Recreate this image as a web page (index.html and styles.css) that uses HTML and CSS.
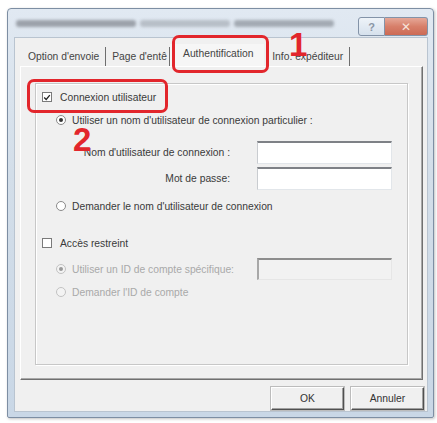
FILE: index.html
```html
<!DOCTYPE html>
<html lang="fr">
<head>
<meta charset="utf-8">
<link rel="stylesheet" href="styles.css">
</head>
<body>
<div class="window">
  <div class="titlebar">
    <div class="title-blur"><span class="b1"></span><span class="b2"></span><span class="b3"></span></div>
    <div class="caption-btns">
      <span class="cbtn help">?</span>
      <span class="cbtn close">✕</span>
    </div>
  </div>
  <div class="client">
    <div class="tabs">
      <div class="tab">Option d'envoie</div>
      <div class="tab t2">Page d'entê</div>
      <div class="tab sel">Authentification</div>
      <div class="tab">Info. expéditeur</div>
    </div>
    <div class="panel">
      <div class="group">
        <div class="row r1">
          <span class="cb checked"><svg viewBox="0 0 10 10" width="9" height="9"><path d="M1.5 5 L4 7.5 L8.5 2" fill="none" stroke="#222" stroke-width="1.6"/></svg></span>
          <span class="lbl">Connexion utilisateur</span>
        </div>
        <div class="row r2 sub">
          <span class="rb on"></span>
          <span class="lbl">Utiliser un nom d'utilisateur de connexion particulier :</span>
        </div>
        <div class="row field r3">
          <span class="flabel">Nom d'utilisateur de connexion :</span>
          <span class="input"></span>
        </div>
        <div class="row field r4">
          <span class="flabel">Mot de passe:</span>
          <span class="input"></span>
        </div>
        <div class="row r5 sub">
          <span class="rb"></span>
          <span class="lbl">Demander le nom d'utilisateur de connexion</span>
        </div>
        <div class="row r6">
          <span class="cb"></span>
          <span class="lbl">Accès restreint</span>
        </div>
        <div class="row r7 sub dis">
          <span class="rb on"></span>
          <span class="lbl wide">Utiliser un ID de compte spécifique:</span>
          <span class="input disabled"></span>
        </div>
        <div class="row r8 sub dis">
          <span class="rb"></span>
          <span class="lbl">Demander l'ID de compte</span>
        </div>
      </div>
    </div>
    <div class="footer">
      <span class="btn">OK</span>
      <span class="btn">Annuler</span>
    </div>
  </div>
</div>
<div class="mark box1"></div>
<div class="mark box2"></div>
<div class="num n1">1</div>
<div class="num n2">2</div>
</body>
</html>
```

FILE: styles.css
```css
* { box-sizing: border-box; }
html, body { margin: 0; padding: 0; }
body {
  position: relative;
  width: 437px;
  height: 423px;
  background: #ffffff;
  font-family: "Liberation Sans", Arial, sans-serif;
  font-size: 10.3px;
  color: #3a3a3a;
  overflow: hidden;
}
.window {
  margin: 8px 0 0 7px;
  width: 427px;
  height: 410px;
  border: 1px solid #7d8ea3;
  border-radius: 4px 4px 2px 2px;
  background: linear-gradient(#e1e9f2, #d3dee9 40%, #c9d7e6);
  box-shadow: 1px 1px 3px rgba(0,0,0,0.25);
  display: flex;
  flex-direction: column;
}
.titlebar {
  height: 28px;
  display: flex;
  align-items: flex-start;
  position: relative;
}
.title-blur {
  margin: 11px 0 0 8px;
  width: 325px;
  height: 8px;
  display: flex;
  gap: 4px;
  filter: blur(1.6px);
}
.title-blur span { height: 7px; background: #8f959d; border-radius: 3px; }
.title-blur .b1 { width: 120px; opacity: .85; }
.title-blur .b2 { width: 90px; opacity: .5; }
.title-blur .b3 { width: 100px; opacity: .75; }
.caption-btns {
  margin-left: auto;
  margin-right: 5px;
  margin-top: 8px;
  display: flex;
}
.cbtn {
  height: 19px;
  display: flex;
  align-items: center;
  justify-content: center;
  border: 1px solid #8393a8;
  font-size: 11px;
}
.help {
  width: 27px;
  border-radius: 3px 0 0 3px;
  background: linear-gradient(#eef3f8, #d6e1ed);
  color: #8a96a6;
  font-weight: bold;
}
.close {
  width: 43px;
  border-left: none;
  border-radius: 0 3px 3px 0;
  background: linear-gradient(#e6a898, #d77f6a 50%, #cc6a55);
  color: #f6e3dc;
  font-size: 12px;
}
.client {
  flex: 1;
  margin: 0 5px 5px 6px;
  background: #f0f0f0;
  border: 1px solid #b9c4d0;
  display: flex;
  flex-direction: column;
}
.tabs {
  margin: 8px 0 0 5px;
  height: 20px;
  display: flex;
  align-items: flex-end;
}
.tab {
  height: 19px;
  padding: 0 6px 0 8px;
  display: flex;
  align-items: center;
  border-right: 1px solid #6e6e6e;
  color: #444;
  white-space: nowrap;
}
.tab.t2 { width: 64px; overflow: hidden; padding-left: 6px; }
.tab.sel {
  height: 22px;
  width: 94px;
  justify-content: center;
  background: #f6f6f6;
  border-right: none;
  align-items: flex-start;
  padding-top: 4px;
}
.panel {
  height: 314px;
  margin: 0 4px 0 5px;
  border-left: 1px solid #ffffff;
  border-top: 1px solid #ffffff;
  border-right: 1px solid #707070;
  border-bottom: 1px solid #707070;
  box-shadow: inset -1px -1px 0 #a8a8a8;
  padding: 16px 14px 14px 14px;
}
.group {
  height: 100%;
  border: 1px solid #c7c7c7;
  box-shadow: inset 1px 1px 0 #ffffff, 1px 1px 0 #ffffff;
  padding: 3px 0 0 6px;
}
.row { display: flex; align-items: center; height: 20px; }
.row.sub { padding-left: 14px; }
.r2 { margin-top: 3px; }
.r3 { margin-top: 11px; height: 23px; }
.r4 { margin-top: 3px; height: 23px; }
.r5 { margin-top: 6px; }
.r6 { margin-top: 17px; }
.r7 { margin-top: 5px; height: 22px; }
.r8 { margin-top: 2px; }
.cb {
  width: 10px;
  height: 10px;
  border: 1px solid #7a7a7a;
  background: #fff;
  display: flex;
  align-items: center;
  justify-content: center;
  margin-right: 8px;
}
.rb {
  width: 10px;
  height: 10px;
  border-radius: 50%;
  border: 1px solid #8a8a8a;
  background: #fff;
  margin-right: 6px;
  display: flex;
  align-items: center;
  justify-content: center;
}
.rb.on::after {
  content: "";
  width: 4px;
  height: 4px;
  border-radius: 50%;
  background: #333;
}
.lbl { white-space: nowrap; color: #3a3a3a; }
.flabel {
  width: 188px;
  text-align: right;
  color: #3a3a3a;
  white-space: nowrap;
  margin-right: 27px;
}
.input {
  width: 135px;
  height: 100%;
  background: #fff;
  border: 1px solid #e2e6ea;
  border-top: 2px solid #7e8186;
  border-left: 1px solid #c9ccd0;
}
.input.disabled {
  background: #f2f2f2;
  border-top: 2px solid #8d8d8d;
  border-left: 2px solid #a8a8a8;
  border-right: 1px solid #e6e6e6;
  border-bottom: 1px solid #e6e6e6;
}
.dis .lbl { color: #a9a9a9; }
.dis .rb { border-color: #c2c2c2; background: #f3f3f3; }
.dis .rb.on::after { background: #9a9a9a; }
.lbl.wide { width: 185px; }
.footer {
  flex: 1;
  display: flex;
  justify-content: flex-end;
  align-items: flex-start;
  gap: 7px;
  padding: 7px 3px 0 0;
}
.btn {
  width: 73px;
  height: 23px;
  display: flex;
  align-items: center;
  justify-content: center;
  background: #f0f0f0;
  border: 1px solid;
  border-color: #ffffff #505050 #505050 #ffffff;
  box-shadow: inset -1px -1px 0 #a0a0a0, 0 0 0 1px #bcbcbc;
  color: #333;
}
.mark {
  position: absolute;
  border: 3px solid #e2262c;
  border-radius: 7px;
}
.box1 { left: 172px; top: 35px; width: 97px; height: 38px; }
.box2 { left: 27px; top: 79px; width: 141px; height: 34px; }
.num {
  position: absolute;
  color: #e2262c;
  font-family: "Liberation Sans", Arial, sans-serif;
  font-weight: bold;
  font-size: 33px;
  line-height: 1;
}
.n1 { left: 289px; top: 28px; }
.n2 { left: 73px; top: 123px; }
```
